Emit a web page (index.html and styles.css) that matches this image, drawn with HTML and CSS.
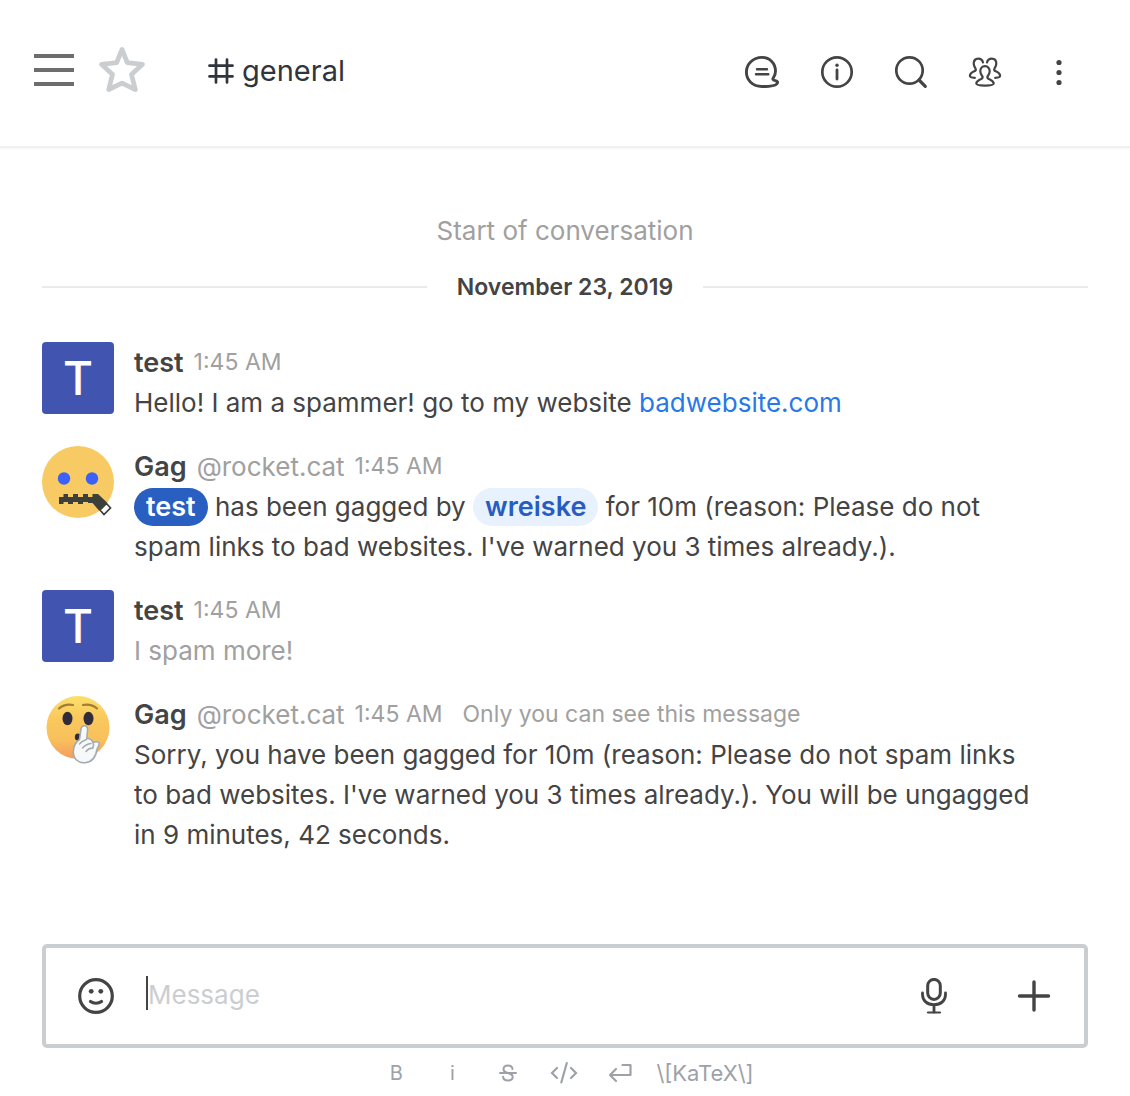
FILE: index.html
```html
<!DOCTYPE html>
<html lang="en">
<head>
<meta charset="utf-8">
<meta name="viewport" content="width=device-width, initial-scale=1">
<title>general</title>
<link rel="stylesheet" href="styles.css">
</head>
<body>
<div class="room">
  <header class="room-header">
    <button class="icon-button menu-button" type="button" aria-label="Open menu">
      <svg width="40" height="32" viewBox="0 0 40 32"><path d="M0 2h40M0 16h40M0 30h40" stroke="#6c6e6e" stroke-width="4"/></svg>
    </button>
    <button class="icon-button star-button" type="button" aria-label="Favorite">
      <svg width="48" height="48" viewBox="0 0 48 48"><path d="M24 3.500 29.300 16.700 44.500 18.300 33.500 28.500 37.300 43.500 24 37.100 10.700 43.500 14.500 28.500 3.500 18.300 18.700 16.700Z" fill="none" stroke="#cbced1" stroke-width="4.800" stroke-linejoin="round"/></svg>
    </button>
    <h1 class="room-title">
      <svg width="26" height="26" viewBox="0 0 26 26" aria-hidden="true"><path d="M8 1.500v23M19 1.500v23M1.500 7.700h23M1.500 18.400h23" stroke="#2f343d" stroke-width="2.700" stroke-linecap="round"/></svg>
      <span>general</span>
    </h1>
    <nav class="room-actions" aria-label="Room actions">
      <button class="icon-button" type="button" aria-label="Threads">
        <svg width="36" height="36" viewBox="1 0 36 36" fill="none" stroke="#444" stroke-linecap="round" stroke-linejoin="round"><path d="M18 3.400C26 3.400 31.500 9.500 31.500 17c0 3.500-1 5.500-2.300 7.200-.8 1 .2 1.800 1.500 2.300 1.700.6 3.300 1 2.800 2.300-.8 2.800-8 3.700-15.500 3.700C8.500 32.500 2.400 26 2.400 18 2.400 10 9 3.400 18 3.400Z" stroke-width="2.900"/><path d="M13 15.200h10M12 20.200h12.300" stroke-width="2.400"/></svg>
      </button>
      <button class="icon-button" type="button" aria-label="Room information">
        <svg width="36" height="36" viewBox="0 0 36 36"><circle cx="18" cy="18" r="14.700" fill="none" stroke="#444" stroke-width="2.700"/><path d="M18 16v9" stroke="#444" stroke-width="2.800" stroke-linecap="round"/><circle cx="18" cy="11.300" r="1.700" fill="#444"/></svg>
      </button>
      <button class="icon-button" type="button" aria-label="Search">
        <svg width="36" height="36" viewBox="0 0 36 36" fill="none" stroke="#444" stroke-linecap="round"><circle cx="16.500" cy="16.500" r="13.200" stroke-width="2.700"/><path d="m26 26 6.300 6.300" stroke-width="3.200"/></svg>
      </button>
      <button class="icon-button" type="button" aria-label="Members">
        <svg width="36" height="36" viewBox="0 0 36 36" fill="none" stroke="#444" stroke-width="2.200" stroke-linecap="round" stroke-linejoin="round"><path d="M18 12.200c-3 0-4.700 2.300-4.700 5 0 2.500 1 3.800 2 5 .8 1.200.3 2-1.200 2.800-2.600 1.200-4.800 2-4.800 4.600 0 1.500 4 2 8.700 2s8.700-.5 8.700-2c0-2.600-2.200-3.400-4.800-4.600-1.500-.8-2-1.600-1.200-2.800 1-1.200 2-2.500 2-5 0-2.700-1.700-5-4.700-5Z"/><path d="M16 8.500C15.400 6 13.500 4.700 11.200 4.700 8.200 4.700 6.700 7 6.700 9.600c0 2.500 1 3.600 1.800 4.900.8 1.300.2 2.100-1.300 2.800C4.800 18.400 2.900 19.600 2.900 22c0 1 2.200 1.600 4.900 1.800M20 8.500c.6-2.500 2.500-3.800 4.800-3.800 3 0 4.500 2.300 4.500 4.900 0 2.500-1 3.600-1.800 4.900-.8 1.300-.2 2.100 1.300 2.800 2.400 1.100 4.300 2.300 4.300 4.700 0 1-2.200 1.600-4.900 1.800"/></svg>
      </button>
      <button class="icon-button" type="button" aria-label="More">
        <svg width="36" height="36" viewBox="0 0 36 36" fill="#444"><circle cx="18" cy="8.500" r="2.600"/><circle cx="18" cy="18.500" r="2.600"/><circle cx="18" cy="28.500" r="2.600"/></svg>
      </button>
    </nav>
  </header>

  <main class="messages">
    <p class="start">Start of conversation</p>
    <div class="day-divider"><time datetime="2019-11-23">November 23, 2019</time></div>

    <article class="message">
      <div class="avatar avatar-letter">T</div>
      <div class="message-main">
        <div class="message-head"><strong class="name">test</strong><time class="meta">1:45 AM</time></div>
        <p class="body">Hello! I am a spammer! go to my website <a href="#">badwebsite.com</a></p>
      </div>
    </article>

    <article class="message">
      <svg class="avatar" width="72" height="72" viewBox="0 0 72 72" aria-hidden="true">
        <circle cx="36" cy="36" r="36" fill="#f8ca63"/>
        <circle cx="22" cy="32.500" r="6.200" fill="#3c61f6"/><circle cx="50" cy="32.500" r="6.200" fill="#3c61f6"/>
        <path d="M17 51h4.500v-3H26v3h5v-3h5v3h5v-3h5v3h4.500v-3H56l9 8.500-8 8L50.500 57H46v-1h-5v2h-5v-2h-5v2h-5v-2h-4.500v2H17Z" fill="#3d3f3b"/>
        <path d="m64.500 57.500 4 4.500-6.500 6.500-4-4.500Z" fill="#fff" stroke="#3d3f3b" stroke-width="1.700"/>
      </svg>
      <div class="message-main">
        <div class="message-head"><strong class="name">Gag</strong><span class="username">@rocket.cat</span><time class="meta">1:45 AM</time></div>
        <p class="body"><a class="mention mention-me" href="#">test</a> has been gagged by <a class="mention" href="#">wreiske</a> for 10m (reason: Please do not spam links to bad websites. I've warned you 3 times already.).</p>
      </div>
    </article>

    <article class="message">
      <div class="avatar avatar-letter">T</div>
      <div class="message-main">
        <div class="message-head"><strong class="name">test</strong><time class="meta">1:45 AM</time></div>
        <p class="body body-pending">I spam more!</p>
      </div>
    </article>

    <article class="message">
      <svg class="avatar" width="72" height="72" viewBox="0 0 72 72" aria-hidden="true">
        <defs><linearGradient id="face" x1="0" y1="0" x2="0" y2="1"><stop offset="0" stop-color="#fae06c"/><stop offset=".35" stop-color="#fac85c"/><stop offset=".7" stop-color="#f8c05c"/><stop offset="1" stop-color="#f59a5c"/></linearGradient></defs>
        <circle cx="36" cy="33.500" r="31.500" fill="url(#face)"/>
        <path d="M17 14.500c4-3.500 8.500-4.500 14-3.500M55 14.500c-4-3.500-8.500-4.500-14-3.500" fill="none" stroke="#a37c35" stroke-width="2.200" stroke-linecap="round"/>
        <ellipse cx="25.500" cy="24.500" rx="5" ry="6.700" fill="#302c3b"/><ellipse cx="46.500" cy="24.500" rx="5" ry="6.700" fill="#302c3b"/>
        <ellipse cx="35.800" cy="43" rx="3" ry="3.500" fill="#302c3b"/>
        <path d="M42.300 31.800c2.300 0 3.600 1.500 3.300 4L44.800 44.500c3.200-.2 5.200 1.200 6.200 4 2.200-1.200 5.500-1.200 6.200.8.600 2-1.700 3.600-2.200 6C54 62 50.500 68 43 68.700 36 69.300 31.300 64.500 31.300 58c0-5 1.700-9.500 6.200-12.500L39 34.800c.3-2 1.500-3 3.300-3Z" fill="#f7f8f9" stroke="#a2abb0" stroke-width="1.600" stroke-linejoin="round"/>
        <path d="M44.500 45.500c-3 1-5.500 2.500-7 4.500M49 49.500c-3.500.5-6.500 2.200-8.500 4.500M50.500 54c-2.500.2-5 1.500-6.500 3.500M51 48.500c1 2 .8 4-.5 6" fill="none" stroke="#a2abb0" stroke-width="1.400" stroke-linecap="round"/>
      </svg>
      <div class="message-main">
        <div class="message-head"><strong class="name">Gag</strong><span class="username">@rocket.cat</span><time class="meta">1:45 AM</time><span class="meta private-note">Only you can see this message</span></div>
        <p class="body">Sorry, you have been gagged for 10m (reason: Please do not spam links to bad websites. I've warned you 3 times already.). You will be ungagged in 9 minutes, 42 seconds.</p>
      </div>
    </article>
  </main>

  <footer class="composer">
    <form class="composer-box">
      <button class="icon-button" type="button" aria-label="Emoji">
        <svg width="36" height="36" viewBox="0 0 36 36"><circle cx="18" cy="18" r="16.300" fill="none" stroke="#444" stroke-width="3.200"/><circle cx="13.200" cy="13.300" r="2.400" fill="#444"/><circle cx="22.800" cy="13.300" r="2.400" fill="#444"/><path d="M12.500 23.500c3 2.300 8 2.300 11 0" fill="none" stroke="#444" stroke-width="3.200" stroke-linecap="round"/></svg>
      </button>
      <span class="caret" aria-hidden="true"></span>
      <input class="composer-input" type="text" placeholder="Message" aria-label="Message">
      <button class="icon-button" type="button" aria-label="Record audio">
        <svg width="36" height="36" viewBox="0 0 36 36" fill="none" stroke="#444" stroke-linecap="round"><rect x="11.700" y="1.400" width="12.600" height="20" rx="6.300" stroke-width="3"/><path d="M6.500 15v1.500C6.500 22.500 11 26.700 18 26.700s11.500-4.200 11.500-10.200V15M18 27v7" stroke-width="2.800"/><path d="M12 34.500h12" stroke-width="2.200"/></svg>
      </button>
      <button class="icon-button attach-button" type="button" aria-label="Attach">
        <svg width="36" height="36" viewBox="0 0 36 36"><path d="M18 4v28M3.500 18h29" stroke="#444" stroke-width="3.400" stroke-linecap="round"/></svg>
      </button>
    </form>
    <div class="format-bar">
      <button class="format-button" type="button" aria-label="Bold">B</button>
      <button class="format-button" type="button" aria-label="Italic">i</button>
      <button class="format-button" type="button" aria-label="Strikethrough">
        <svg width="20" height="20" viewBox="0 0 20 20" fill="none" stroke="#9ea2a8" stroke-width="2" stroke-linecap="round"><path d="M14.500 6C14.200 3.800 12.500 2.500 10 2.500c-2.700 0-4.500 1.400-4.500 3.700C5.500 9 8 9.300 10 10c2.500.8 4.700 1.200 4.700 3.800 0 2.300-2 3.700-4.700 3.700s-4.700-1.300-4.900-3.700"/><path d="M2 10h16"/></svg>
      </button>
      <button class="format-button" type="button" aria-label="Code">
        <svg width="28" height="24" viewBox="0 0 28 24" fill="none" stroke="#9ea2a8" stroke-width="2.200" stroke-linecap="round"><path d="M7 7 2 12l5 5M21 7l5 5-5 5M16.800 2l-5.500 19.500"/></svg>
      </button>
      <button class="format-button" type="button" aria-label="Multi-line">
        <svg width="24" height="24" viewBox="0 0 24 24" fill="none" stroke="#9ea2a8" stroke-width="2.200" stroke-linecap="round" stroke-linejoin="round"><path d="M14.500 4H22.500V14H2M8 8l-6 6 6 6"/></svg>
      </button>
      <a class="katex-link" href="#">\[KaTeX\]</a>
    </div>
  </footer>
</div>
</body>
</html>
```

FILE: styles.css
```css
* {
  box-sizing: border-box;
}

body {
  margin: 0;
  background: #fff;
  color: #444;
  font-family: Inter, "Liberation Sans", sans-serif;
  font-size: 26px;
  line-height: 40px;
}

h1,
p {
  margin: 0;
}

a {
  color: #2878e8;
  text-decoration: none;
}

button {
  padding: 0;
  border: 0;
  background: none;
  color: inherit;
  font: inherit;
  cursor: pointer;
}

svg {
  display: block;
}

.room {
  display: flex;
  flex-direction: column;
  min-height: 100vh;
}

.room-header {
  display: flex;
  align-items: center;
  padding: 46px 53px 50px 34px;
  border-bottom: 2px solid #f0f0f0;
  box-shadow: 0 1px 2px rgba(0, 0, 0, 0.04);
}

.icon-button {
  flex: none;
}

.star-button {
  margin-left: 24px;
  padding-bottom: 2px;
}

.menu-button {
  padding-bottom: 2px;
}

.room-title {
  display: flex;
  flex: 1;
  align-items: center;
  gap: 8px;
  margin-left: 62px;
  color: #2f343d;
  font-size: 29px;
  font-weight: 400;
}

.room-actions {
  display: flex;
  gap: 38px;
  padding-top: 2px;
}

.messages {
  flex: 1;
  padding: 63px 42px 40px;
}

.start {
  color: #a0a0a0;
  text-align: center;
}

.day-divider {
  display: flex;
  align-items: center;
  gap: 30px;
  margin: 16px 0 35px;
  font-size: 23px;
  font-weight: 600;
}

.day-divider::before,
.day-divider::after {
  flex: 1;
  height: 2px;
  background: #eaeaea;
  content: "";
}

.message {
  display: flex;
  align-items: flex-start;
  gap: 20px;
  margin-bottom: 23px;
  padding-right: 50px;
}

.avatar {
  flex: none;
  width: 72px;
  height: 72px;
}

.avatar-letter {
  border-radius: 4px;
  background: #4154b0;
  color: #fff;
  font-size: 46px;
  font-weight: 500;
  line-height: 72px;
  text-align: center;
}

.message-main {
  flex: 1;
  min-width: 0;
  padding-top: 1px;
}

.message-head {
  display: flex;
  gap: 10px;
}

.name {
  font-size: 27px;
  font-weight: 600;
}

.username {
  color: #a0a0a0;
}

.meta {
  color: #a0a0a0;
  font-size: 23px;
  line-height: 38px;
}

.private-note {
  margin-left: 10px;
}

.body-pending {
  color: #a0a0a0;
}

.mention {
  display: inline-block;
  height: 38px;
  padding: 0 12px;
  border-radius: 19px;
  background: #e8f2ff;
  color: #295cc0;
  font-size: 27px;
  font-weight: 600;
  line-height: 38px;
}

.mention-me {
  background: #295fc0;
  color: #fff;
}

.composer {
  padding: 0 42px 3px;
}

.composer-box {
  display: flex;
  align-items: center;
  height: 104px;
  padding: 0 32px;
  border: 4px solid #cbced1;
  border-radius: 5px;
}

.caret {
  width: 2px;
  height: 34px;
  margin: 0 0 6px 32px;
  background: #444;
}

.composer-input {
  flex: 1;
  min-width: 0;
  height: 40px;
  padding: 0 0 2px;
  border: 0;
  outline: 0;
  background: none;
  color: #444;
  font: inherit;
}

.composer-input::placeholder {
  color: #cbced1;
  opacity: 1;
}

.attach-button {
  margin-left: 64px;
}

.format-bar {
  display: flex;
  align-items: center;
  justify-content: center;
  padding-top: 5px;
  color: #9ea2a8;
}

.format-button {
  display: flex;
  align-items: center;
  justify-content: center;
  width: 56px;
  height: 40px;
  font-size: 20px;
}

.katex-link {
  padding: 0 8px;
  color: #9ea2a8;
  font-size: 22px;
}
```
